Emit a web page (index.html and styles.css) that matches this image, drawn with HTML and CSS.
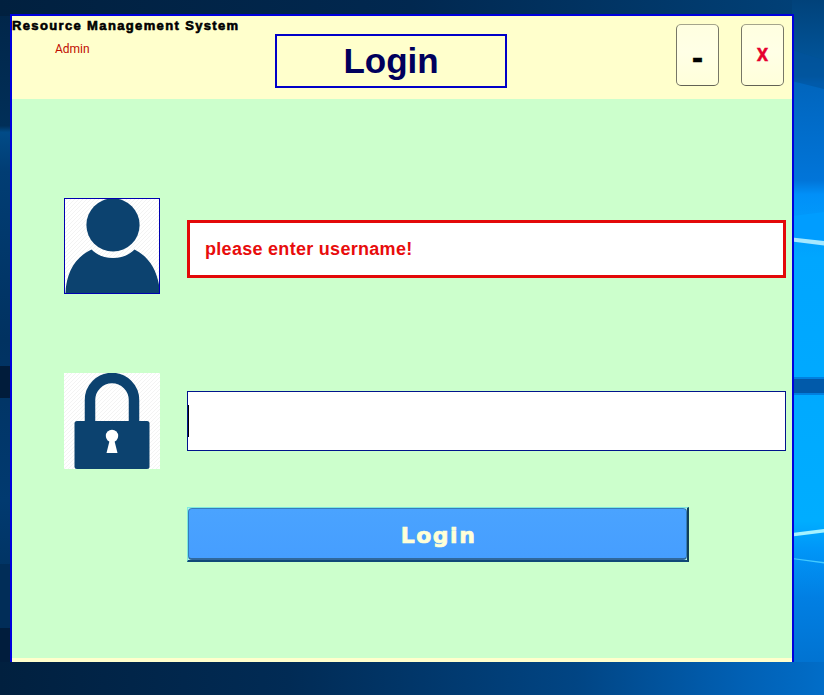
FILE: index.html
```html
<!DOCTYPE html>
<html lang="en">
<head>
<meta charset="utf-8">
<title>Resource Management System</title>
<link rel="stylesheet" href="styles.css">
</head>
<body>
<svg class="wallpaper" viewBox="0 0 824 695" aria-hidden="true">
  <defs>
    <linearGradient id="top"><stop offset="0" stop-color="#01203f"/><stop offset=".5" stop-color="#012850"/><stop offset="1" stop-color="#01427a"/></linearGradient>
    <linearGradient id="bottom"><stop offset="0" stop-color="#01203f"/><stop offset=".35" stop-color="#012b55"/><stop offset=".7" stop-color="#014584"/><stop offset=".9" stop-color="#0160b4"/><stop offset="1" stop-color="#016dc8"/></linearGradient>
    <linearGradient id="left" x2="0" y2="1"><stop offset="0" stop-color="#01264a"/><stop offset=".17" stop-color="#012f58"/><stop offset=".18" stop-color="#014b88"/><stop offset=".24" stop-color="#013d74"/><stop offset=".5" stop-color="#013261"/><stop offset=".75" stop-color="#013a70"/><stop offset="1" stop-color="#012c55"/></linearGradient>
    <linearGradient id="right" x2="0" y2="1"><stop offset="0" stop-color="#01427a"/><stop offset=".11" stop-color="#0159a2"/><stop offset=".12" stop-color="#0165bd"/><stop offset=".26" stop-color="#0175d9"/><stop offset=".28" stop-color="#0190f8"/><stop offset=".37" stop-color="#00a6ff"/><stop offset=".75" stop-color="#00adff"/><stop offset=".79" stop-color="#0096f8"/><stop offset=".86" stop-color="#017fe3"/><stop offset="1" stop-color="#016dc8"/></linearGradient>
  </defs>
  <rect width="824" height="695" fill="url(#top)"/>
  <rect y="16" width="12" height="646" fill="url(#left)"/>
  <rect y="366" width="12" height="32" fill="#011c3b"/>
  <rect y="564" width="12" height="64" fill="#012d58"/>
  <rect y="628" width="12" height="40" fill="#011d3d"/>
  <rect x="792" y="0" width="32" height="695" fill="url(#right)"/>
  <rect y="662" width="824" height="33" fill="url(#bottom)"/>
  <path d="M792 81L824 89V60L792 50Z" fill="#01539c" opacity=".6"/>
  <path d="M792 216L824 212V244L792 239Z" fill="#009dff"/>
  <path d="M792 237.500L824 241V245.500L792 241.500Z" fill="#a5e8ff"/>
  <rect x="792" y="377" width="32" height="18" fill="#0180df"/>
  <rect x="792" y="379" width="32" height="14" fill="#015aaa"/>
  <path d="M792 533L824 529V532.500L792 536.500Z" fill="#a5f2ff"/>
  <path d="M792 558L824 562V563.500L792 559Z" fill="#42caff"/>
</svg>
<main class="window">
  <header class="header">
    <div class="brand">
      <div class="brand-name">Resource Management System</div>
      <div class="role">Admin</div>
    </div>
    <h1 class="title">Login</h1>
    <div class="controls">
      <button class="control minimize" type="button">-</button>
      <button class="control close" type="button">X</button>
    </div>
  </header>
  <form class="form">
    <div class="row">
      <svg class="icon framed" viewBox="1 1 94 94">
        <defs><pattern id="hatch" width="4" height="4" patternUnits="userSpaceOnUse"><rect width="4" height="4" fill="#fff"/><path d="M-1 1L1 -1M0 4L4 0M3 5L5 3" stroke="#f0f0f0" stroke-width=".8"/></pattern></defs>
        <rect width="96" height="96" fill="url(#hatch)"/>
        <circle cx="49" cy="27" r="26.600" fill="#0c426f"/>
        <path d="M1.500 96C2 75 11 59 27.500 51.500C33 57 40 60 49 60C58 60 65 57 70.500 51.500C86 59 95 75 96 96Z" fill="#0c426f"/>
      </svg>
      <div class="field error">please enter username!</div>
    </div>
    <div class="row password">
      <svg class="icon" viewBox="0 0 96 96">
        <rect width="96" height="96" fill="url(#hatch)"/>
        <path d="M26 50V27A22 22 0 0 1 70 27V50" fill="none" stroke="#0c426f" stroke-width="10.500"/>
        <rect x="10.500" y="48" width="75" height="48" rx="2.500" fill="#0c426f"/>
        <circle cx="48" cy="63" r="6.200" fill="#fff"/>
        <path d="M46 66H50L53.500 80H42.500Z" fill="#fff"/>
      </svg>
      <div class="field"><span class="caret"></span></div>
    </div>
    <button class="submit" type="button"><span class="submit-face">Login</span></button>
  </form>
</main>
</body>
</html>
```
FILE: styles.css
```css
* { box-sizing: border-box; }
body { margin: 0; height: 695px; overflow: hidden; padding: 14px 0 0 10px; font-family: "Liberation Sans", Arial, sans-serif; }
.wallpaper { position: absolute; inset: 0; z-index: -1; width: 824px; height: 695px; }
.window { width: 784px; height: 648px; border: 2px solid #0000dc; border-bottom: 0; background: #ffffcc; }
.header { height: 83px; display: grid; grid-template-columns: 263px 232px 1fr; }
.brand-name { font: bold 13px/20px "Liberation Sans", sans-serif; letter-spacing: 1.36px; -webkit-text-stroke: .6px #000; white-space: nowrap; color: #000; }
.role { margin: 4px 0 0 43px; font: 12px/18px Roboto, sans-serif; color: #c00c00; }
.title { margin: 18px 0 0; height: 54px; border: 2px solid #0000c8; text-align: center; font: bold 35px/49px "Liberation Sans", sans-serif; color: #00005c; }
.controls { display: flex; justify-content: flex-end; gap: 22px; padding: 8px 8px 0 0; }
.control { width: 43px; height: 62px; padding: 0; border: 1px solid #777767; border-top-color: #a5a58b; border-bottom-color: #626255; border-radius: 5px; background: linear-gradient(#ffffe0, #ffffe6 45%, #ffffda); font-family: "Liberation Sans", sans-serif; font-weight: bold; }
.minimize { font-size: 33px; padding-top: 5px; color: #000; -webkit-text-stroke: .6px #000; }
.close { font: bold 18px Roboto, sans-serif; padding-bottom: 2px; color: #e6002e; -webkit-text-stroke: .4px #e6002e; }
.form { height: 559px; background: #ccffcc; padding: 99px 6px 0 52px; }
.row { display: flex; align-items: center; height: 96px; gap: 27px; }
.icon { width: 96px; height: 96px; flex: none; }
.framed { border: 1px solid #0000b0; }
.field { height: 60px; flex: 1; border: 1px solid #00148c; background: #fff; display: flex; align-items: center; }
.error { height: 58px; border: 3px solid #e30909; padding-left: 15px; font-weight: bold; font-size: 18px; letter-spacing: .29px; color: #e80c0c; margin-top: 6px; }
.password { margin-top: 79px; }
.caret { width: 1px; height: 32px; background: #000; }
.submit { display: block; width: 502px; height: 55px; margin: 38px 0 0 123px; padding: 0; border: 1px solid #7de9e0; border-right: 2px solid #10405a; border-bottom: 2px solid #104878; background: #b8f4e8; }
.submit-face { display: block; height: 52px; border: 1px solid #367cba; border-bottom: 2px solid #30689d; border-radius: 4px; background: linear-gradient(#4aa3ff, #469eff); color: #ffffd7; font: bold 22px/54px "DejaVu Sans", sans-serif; letter-spacing: 1.5px; -webkit-text-stroke: .7px #ffffd7; padding-left: 2px; }
```
